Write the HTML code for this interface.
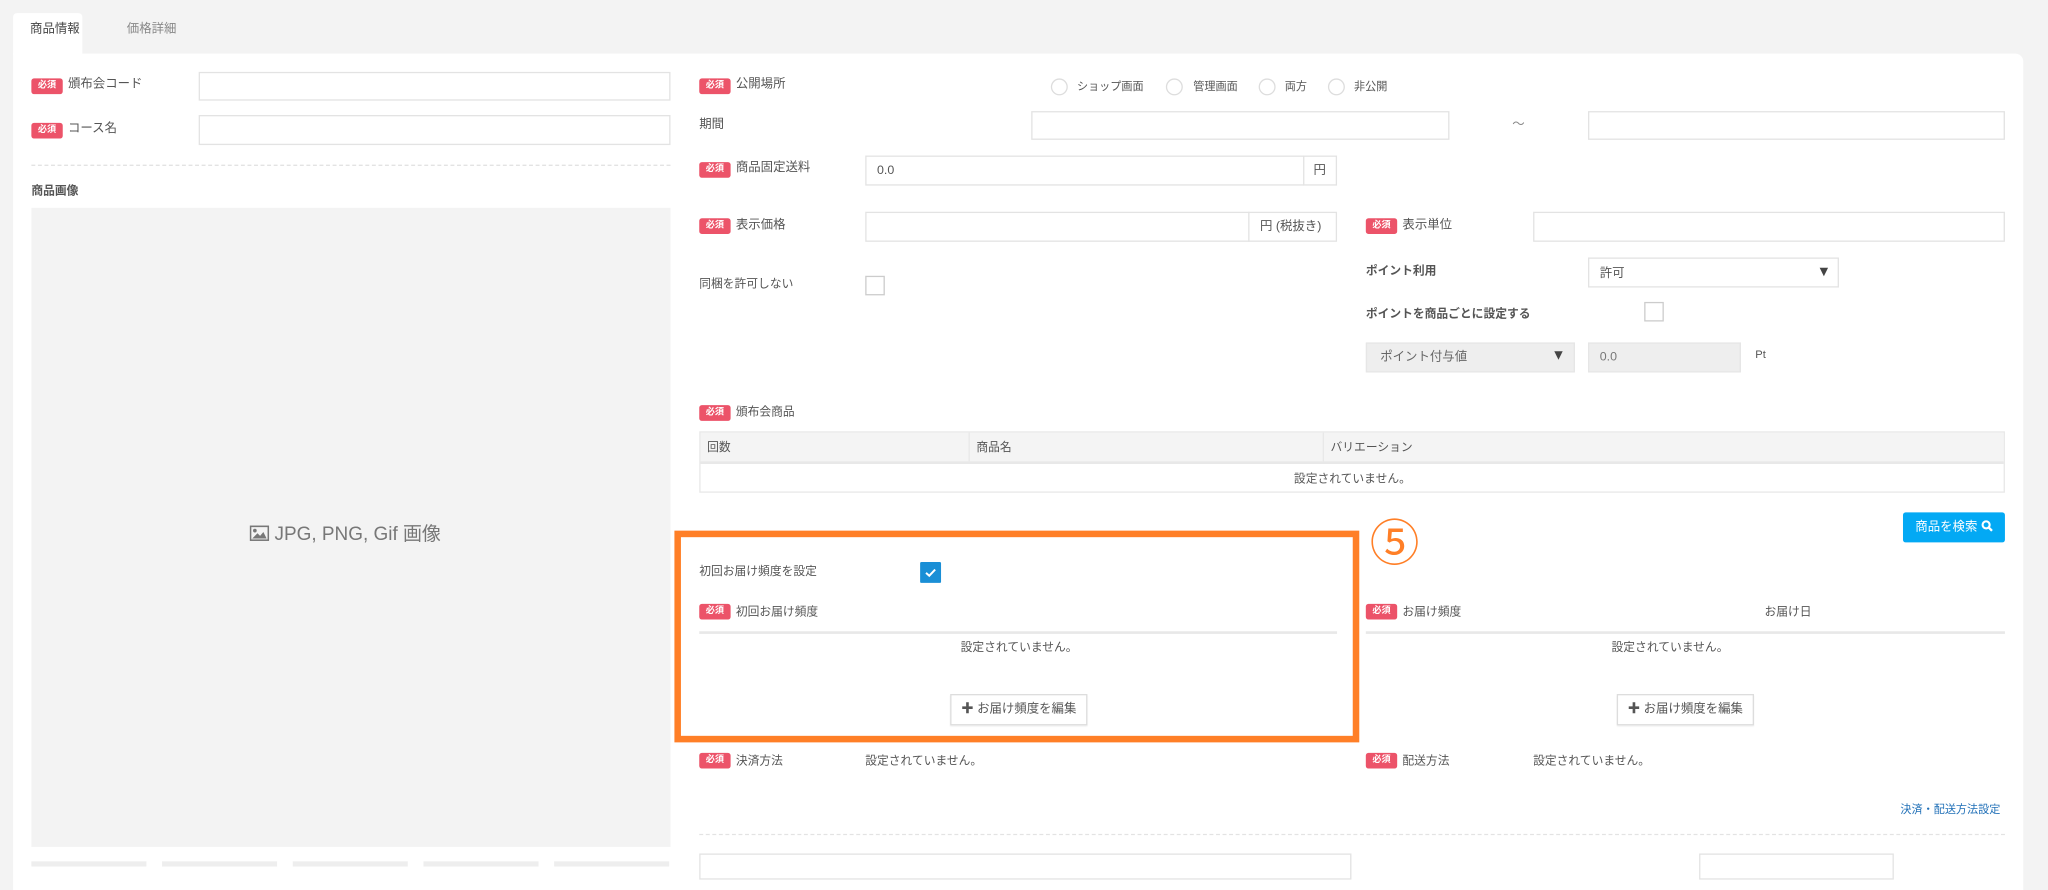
<!DOCTYPE html>
<html><head><meta charset="utf-8">
<style>
html,body{margin:0;padding:0;background:#f3f3f3;width:2048px;height:863px;overflow:hidden}
#w{position:absolute;left:0;top:0;width:1568px;height:661px;transform:scale(1.307);transform-origin:0 0;font-family:"Liberation Sans","Noto Sans CJK JP",sans-serif;font-size:9.5px;color:#555}
.a{position:absolute}
.panel{left:10px;top:41px;width:1538px;height:640px;background:#fff;border-radius:0 6px 0 0}
.tab{left:10px;top:10px;width:53px;height:32px;background:#fff;border-radius:3px 3px 0 0}
.b{position:absolute;width:24px;height:12px;background:#ec5369;color:#fff;font-size:7px;font-weight:bold;text-align:center;line-height:12px;border-radius:2px}
.l{position:absolute;line-height:12px;white-space:nowrap}
.in{position:absolute;background:#fff;border:1px solid #e3e3e3;box-sizing:border-box}
.dis{background:#eee;border-color:#e6e6e6}
.r{position:absolute;width:13px;height:13px;border:1px solid #ddd;border-radius:50%;box-sizing:border-box}
.cb{position:absolute;width:15px;height:15px;border:1px solid #ccc;box-sizing:border-box;background:#fff}
.dash{position:absolute;border-top:1px dashed #e3e3e3;height:0}
.btn{position:absolute;border:1px solid #ddd;background:#fff;box-sizing:border-box;text-align:center;line-height:22px;font-size:9.5px;color:#555;box-shadow:0 1px 1px #eee}
</style></head><body><div id="w">
<div class="a tab"></div>
<div class="l" style="left:23px;top:17px;color:#444">商品情報</div>
<div class="l" style="left:97px;top:17px;color:#888">価格詳細</div>
<div class="a panel"></div>

<!-- left -->
<div class="b" style="left:24px;top:60px">必須</div><div class="l" style="left:52px;top:59px">頒布会コード</div>
<div class="in" style="left:152px;top:55px;width:361px;height:22px"></div>
<div class="b" style="left:24px;top:94px">必須</div><div class="l" style="left:52px;top:93px">コース名</div>
<div class="in" style="left:152px;top:88px;width:361px;height:23px"></div>
<div class="dash" style="left:24px;top:126px;width:489px"></div>
<div class="l" style="left:24px;top:140px;font-weight:bold;font-size:9px">商品画像</div>
<div class="a" style="left:24px;top:159px;width:489px;height:489px;background:#f3f3f3"></div>
<div class="l" style="left:191px;top:401px;font-size:14.5px;line-height:16px;color:#777">
<svg width="15" height="12" viewBox="0 0 15 12" style="vertical-align:-1px"><rect x="0.7" y="0.7" width="13.6" height="10.6" fill="none" stroke="#777" stroke-width="1.2"/><circle cx="4" cy="4" r="1.4" fill="#777"/><path d="M2 10 L6 6 L8 8 L10.5 5 L13 10 Z" fill="#777"/></svg> JPG, PNG, Gif 画像</div>
<div class="a" style="left:24px;top:659px;width:88px;height:4px;background:#eee"></div>
<div class="a" style="left:124px;top:659px;width:88px;height:4px;background:#eee"></div>
<div class="a" style="left:224px;top:659px;width:88px;height:4px;background:#eee"></div>
<div class="a" style="left:324px;top:659px;width:88px;height:4px;background:#eee"></div>
<div class="a" style="left:424px;top:659px;width:88px;height:4px;background:#eee"></div>

<!-- right -->
<div class="b" style="left:535px;top:60px">必須</div><div class="l" style="left:563px;top:59px">公開場所</div>
<div class="r" style="left:804px;top:60px"></div><div class="l" style="left:824px;top:60px;font-size:8.5px">ショップ画面</div>
<div class="r" style="left:892px;top:60px"></div><div class="l" style="left:913px;top:60px;font-size:8.5px">管理画面</div>
<div class="r" style="left:963px;top:60px"></div><div class="l" style="left:983px;top:60px;font-size:8.5px">両方</div>
<div class="r" style="left:1016px;top:60px"></div><div class="l" style="left:1036px;top:60px;font-size:8.5px">非公開</div>
<div class="l" style="left:535px;top:90px">期間</div>
<div class="in" style="left:789px;top:85px;width:320px;height:22px"></div>
<div class="l" style="left:1157px;top:90px;color:#888">～</div>
<div class="in" style="left:1215px;top:85px;width:319px;height:22px"></div>

<div class="b" style="left:535px;top:124px">必須</div><div class="l" style="left:563px;top:123px">商品固定送料</div>
<div class="in" style="left:662px;top:119px;width:361px;height:23px"></div>
<div class="l" style="left:671px;top:125px">0.0</div>
<div class="a" style="left:997px;top:119px;width:1px;height:23px;background:#e3e3e3"></div>
<div class="l" style="left:1005px;top:125px">円</div>

<div class="b" style="left:535px;top:167px">必須</div><div class="l" style="left:563px;top:167px">表示価格</div>
<div class="in" style="left:662px;top:162px;width:361px;height:23px"></div>
<div class="a" style="left:955px;top:162px;width:1px;height:23px;background:#e3e3e3"></div>
<div class="l" style="left:964px;top:168px">円 (税抜き)</div>
<div class="b" style="left:1045px;top:167px">必須</div><div class="l" style="left:1073px;top:167px">表示単位</div>
<div class="in" style="left:1173px;top:162px;width:361px;height:23px"></div>

<div class="l" style="left:535px;top:211px;font-size:9px">同梱を許可しない</div>
<div class="cb" style="left:662px;top:211px"></div>
<div class="l" style="left:1045px;top:201px;font-size:9px;font-weight:bold">ポイント利用</div>
<div class="in" style="left:1215px;top:197px;width:192px;height:23px"></div>
<div class="l" style="left:1224px;top:204px">許可</div>
<div class="l" style="left:1390px;top:202px;font-size:11px;color:#444">▼</div>
<div class="l" style="left:1045px;top:234px;font-size:9px;font-weight:bold">ポイントを商品ごとに設定する</div>
<div class="cb" style="left:1258px;top:231px"></div>
<div class="in dis" style="left:1045px;top:262px;width:160px;height:23px"></div>
<div class="l" style="left:1056px;top:268px;color:#666">ポイント付与値</div>
<div class="l" style="left:1187px;top:266px;font-size:11px;color:#444">▼</div>
<div class="in dis" style="left:1215px;top:262px;width:117px;height:23px"></div>
<div class="l" style="left:1224px;top:268px;color:#777">0.0</div>
<div class="l" style="left:1343px;top:265px;font-size:8.5px">Pt</div>

<div class="b" style="left:535px;top:310px">必須</div><div class="l" style="left:563px;top:309px;font-size:9px">頒布会商品</div>
<div class="a" style="left:535px;top:330px;width:999px;height:47px;border:1px solid #e8e8e8;box-sizing:border-box"></div>
<div class="a" style="left:536px;top:331px;width:997px;height:22px;background:#f4f4f4;border-bottom:2px solid #e8e8e8"></div>
<div class="a" style="left:741px;top:331px;width:1px;height:22px;background:#e8e8e8"></div>
<div class="a" style="left:1012px;top:331px;width:1px;height:22px;background:#e8e8e8"></div>
<div class="l" style="left:541px;top:336px;font-size:9px">回数</div>
<div class="l" style="left:747px;top:336px;font-size:9px">商品名</div>
<div class="l" style="left:1018px;top:336px;font-size:9px">バリエーション</div>
<div class="l" style="left:990px;top:360px;font-size:9px">設定されていません。</div>

<div class="a" style="left:1456px;top:392px;width:78px;height:23px;background:#03a9f4;border-radius:2px;color:#fff;font-size:9.5px;line-height:23px;text-align:center">商品を検索 <svg width="9" height="9" viewBox="0 0 10 10" style="vertical-align:-1px"><circle cx="4" cy="4" r="3" fill="none" stroke="#fff" stroke-width="1.8"/><path d="M6.2 6.2 L9 9" stroke="#fff" stroke-width="2"/></svg></div>

<div class="a" style="left:516px;top:406px;width:524px;height:162px;border:5px solid #ff7f27;box-sizing:border-box"></div>
<div class="l" style="left:1048px;top:396px;font-size:38px;line-height:42px;color:#ff7f27">⑤</div>

<div class="l" style="left:535px;top:431px;font-size:9px">初回お届け頻度を設定</div>
<div class="a" style="left:704px;top:430px;width:16px;height:16px;background:#1a8fd6;border-radius:1px"><svg width="16" height="16" viewBox="0 0 16 16"><path d="M4.5 8.3 L7 10.5 L11.5 5.8" fill="none" stroke="#fff" stroke-width="1.5"/></svg></div>
<div class="b" style="left:535px;top:462px">必須</div><div class="l" style="left:563px;top:462px;font-size:9px">初回お届け頻度</div>
<div class="a" style="left:535px;top:483px;width:488px;height:2px;background:#e8e8e8"></div>
<div class="l" style="left:735px;top:489px;font-size:9px">設定されていません。</div>
<div class="btn" style="left:727px;top:531px;width:105px;height:24px">✚ お届け頻度を編集</div>

<div class="b" style="left:1045px;top:462px">必須</div><div class="l" style="left:1073px;top:462px;font-size:9px">お届け頻度</div>
<div class="l" style="left:1350px;top:462px;font-size:9px">お届け日</div>
<div class="a" style="left:1045px;top:483px;width:489px;height:2px;background:#e8e8e8"></div>
<div class="l" style="left:1233px;top:489px;font-size:9px">設定されていません。</div>
<div class="btn" style="left:1237px;top:531px;width:105px;height:24px">✚ お届け頻度を編集</div>

<div class="b" style="left:535px;top:576px">必須</div><div class="l" style="left:563px;top:576px;font-size:9px">決済方法</div>
<div class="l" style="left:662px;top:576px;font-size:9px">設定されていません。</div>
<div class="b" style="left:1045px;top:576px">必須</div><div class="l" style="left:1073px;top:576px;font-size:9px">配送方法</div>
<div class="l" style="left:1173px;top:576px;font-size:9px">設定されていません。</div>
<div class="l" style="left:1454px;top:613px;font-size:8.5px;color:#1f6fb7">決済・配送方法設定</div>
<div class="dash" style="left:535px;top:638px;width:999px"></div>
<div class="in" style="left:535px;top:653px;width:499px;height:20px"></div>
<div class="in" style="left:1300px;top:653px;width:149px;height:20px"></div>
</div></body></html>
